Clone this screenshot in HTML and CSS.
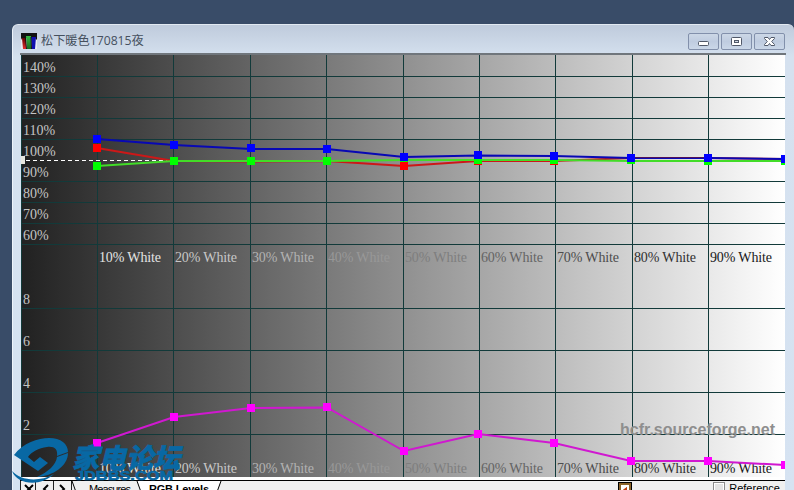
FILE: index.html
```html
<!DOCTYPE html>
<html lang="zh">
<head>
    <meta charset="UTF-8">
    <title>松下暖色170815夜</title>
    <link rel="stylesheet" href="styles.css">
</head>
<body>
    <div class="window">
        <header class="titlebar">
            <svg class="app-icon" width="16" height="16" viewBox="0 0 16 16">
                <defs>
                    <linearGradient id="ir" x1="0" y1="0" x2="0" y2="1"><stop offset="0" stop-color="#600"/><stop offset="1" stop-color="#e43030"/></linearGradient>
                    <linearGradient id="ig" x1="0" y1="0" x2="0" y2="1"><stop offset="0" stop-color="#3b4"/><stop offset="1" stop-color="#196a22"/></linearGradient>
                </defs>
                <rect width="16" height="16" fill="#e8edf3"/>
                <path d="M0 0H16V7L14 5H1L0 7Z" fill="#111"/>
                <path d="M1 5H5V16H2Z" fill="url(#ir)"/>
                <path d="M5 3H10V16H6Z" fill="url(#ig)"/>
                <path d="M10 4H15L14 16H11Z" fill="#1010b0"/>
                <path d="M4.5 5L5.500 16M10 4L10.500 16" stroke="#111"/>
            </svg>
            <h1 class="title">松下暖色170815夜</h1>
            <div class="buttons">
                <button class="win-btn"><svg width="29" height="15"><rect x="9.500" y="7.500" width="10" height="4" rx="1" fill="#fff" stroke="#505868"/></svg></button>
                <button class="win-btn"><svg width="29" height="15"><rect x="9.500" y="3.500" width="10" height="8" rx="1" fill="#fff" stroke="#505868"/><rect x="12.500" y="6.500" width="4" height="2" fill="#d0d8e4" stroke="#505868"/></svg></button>
                <button class="win-btn"><svg width="29" height="15"><path d="M9.500 3.500H13L14.500 5.500L16 3.500H19.500V4.500L16.700 7.500L19.500 10.500V11.500H16L14.500 9.500L13 11.500H9.500V10.500L12.300 7.500L9.500 4.500Z" fill="#fff" stroke="#505868"/></svg></button>
            </div>
        </header>

        <!-- RGB levels on top, delta E below -->
        <svg class="chart" width="764" height="422" viewBox="21 55 764 422">
            <defs>
                <linearGradient id="gray">
                    <stop offset="0" stop-color="#212121"/>
                    <stop offset="1" stop-color="#fff"/>
                </linearGradient>
            </defs>
            <rect x="21" y="55" width="764" height="422" fill="url(#gray)"/>
            <path class="grid" d="M21 76.500H785M21 97.500H785M21 118.500H785M21 139.500H785M21 181.500H785M21 202.500H785M21 223.500H785M21 244.500H785M21 308.500H785M21 350.500H785M21 392.500H785M21 434.500H785"/>
            <path class="grid" d="M21.500 55V477M97.500 55V477M173.500 55V477M250.500 55V477M326.500 55V477M403.500 55V477M479.500 55V477M555.500 55V477M632.500 55V477M708.500 55V477"/>
            <path class="target" d="M26 160.500H785"/>
            <rect x="21" y="156" width="4" height="8" fill="#e8e8e0"/>

            <g class="scale">
                <text x="23" y="72">140%</text>
                <text x="23" y="93">130%</text>
                <text x="23" y="114">120%</text>
                <text x="23" y="135">110%</text>
                <text x="23" y="156">100%</text>
                <text x="23" y="177">90%</text>
                <text x="23" y="198">80%</text>
                <text x="23" y="219">70%</text>
                <text x="23" y="240">60%</text>
                <text x="23" y="304">8</text>
                <text x="23" y="346">6</text>
                <text x="23" y="388">4</text>
                <text x="23" y="430">2</text>
            </g>
            <g class="levels">
                <text x="99" y="262" textLength="62" fill="#e4e4e4">10% White</text>
                <text x="175" y="262" textLength="62" fill="#c8c8c8">20% White</text>
                <text x="252" y="262" textLength="62" fill="#b2b2b2">30% White</text>
                <text x="328" y="262" textLength="62" fill="#989898">40% White</text>
                <text x="405" y="262" textLength="62" fill="#7e7e7e">50% White</text>
                <text x="481" y="262" textLength="62" fill="#646464">60% White</text>
                <text x="557" y="262" textLength="62" fill="#4c4c4c">70% White</text>
                <text x="634" y="262" textLength="62" fill="#303030">80% White</text>
                <text x="710" y="262" textLength="62" fill="#181818">90% White</text>
                <text x="99" y="473" textLength="62" fill="#e4e4e4">10% White</text>
                <text x="175" y="473" textLength="62" fill="#c8c8c8">20% White</text>
                <text x="252" y="473" textLength="62" fill="#b2b2b2">30% White</text>
                <text x="328" y="473" textLength="62" fill="#989898">40% White</text>
                <text x="405" y="473" textLength="62" fill="#7e7e7e">50% White</text>
                <text x="481" y="473" textLength="62" fill="#646464">60% White</text>
                <text x="557" y="473" textLength="62" fill="#4c4c4c">70% White</text>
                <text x="634" y="473" textLength="62" fill="#303030">80% White</text>
                <text x="710" y="473" textLength="62" fill="#181818">90% White</text>
            </g>
            <text class="source" x="620" y="435" textLength="155">hcfr.sourceforge.net</text>

            <g class="red">
                <polyline points="97,148 174,161 251,161.500 327,161 404,166 478,161 554,161 631,158 708,158 785,159"/>
                <path d="M93 144h8v8h-8zM170 157h8v8h-8zM247 157h8v8h-8zM400 162h8v8h-8zM474 157h8v8h-8zM550 157h8v8h-8z"/>
            </g>
            <g class="green">
                <polyline points="97,166 174,161 251,161 327,161 404,160 478,160 554,160 631,161 708,161 785,161"/>
                <path d="M93 162h8v8h-8zM170 157h8v8h-8zM247 157h8v8h-8zM323 157h8v8h-8zM400 156h8v6h-8zM474 156h8v8h-8zM550 156h8v8h-8zM627 156h8v8h-8zM704 157h8v8h-8zM781 157h8v8h-8z"/>
            </g>
            <g class="blue">
                <polyline points="97,139 174,145 251,149 327,149 404,157 478,155.500 554,156 631,158 708,158 785,159"/>
                <path d="M93 135h8v8h-8zM170 141h8v8h-8zM247 144h8v8h-8zM323 145h8v8h-8zM400 153h8v8h-8zM474 151h8v8h-8zM550 152h8v8h-8zM627 154h8v8h-8zM704 154h8v8h-8zM781 155h8v8h-8z"/>
            </g>
            <path d="M635 157.500H704" stroke="#501058"/>
            <g class="delta">
                <polyline points="97,443 174,417 251,408 327,407.500 404,451 478,434 554,443 631,461 708,461 785,465"/>
                <path d="M93 439h8v8h-8zM170 413h8v8h-8zM247 404h8v8h-8zM323 403h8v8h-8zM400 447h8v8h-8zM474 430h8v8h-8zM550 439h8v8h-8zM627 457h8v8h-8zM704 457h8v8h-8zM781 461h8v8h-8z"/>
            </g>
        </svg>

        <footer class="tabbar">
            <svg class="tabs" width="230" height="22" viewBox="0 0 230 22">
                <path d="M0 0H230V22H0Z" fill="#f0f0f0"/>
                <path d="M52 0H201L193 22H60Z" fill="#fff"/>
                <path d="M52 0H117L125 22H60Z" fill="#f0f0f0"/>
                <path d="M.5 0V22M15.500 0V22M33.500 0V22M51.500 0V22" stroke="#222"/>
                <path d="M52 0L60 22M117 0L125 22M201 0L193 22" stroke="#000" fill="none"/>
                <path d="M5 4L9 8L13 4M5 12L9 8L13 12M28 4L24 8L28 12M40 4L44 8L40 12" stroke="#000" stroke-width="2" fill="none"/>
                <text x="69" y="12" textLength="42">Measures</text>
                <text class="active" x="129" y="12" textLength="60">RGB Levels</text>
            </svg>
            <div class="options">
                <svg class="tool" width="14" height="14"><rect x=".5" y=".5" width="13" height="13" fill="#8a6328" stroke="#000"/><path d="M3 3H11V9H9V5L5 8H3Z" fill="#fff"/><path d="M5 8L9 5V8H6Z" fill="#c43c10"/></svg>
                <label class="reference"><input type="checkbox">Reference</label>
            </div>
        </footer>
    </div>

    <!-- Forum watermark -->
    <div class="watermark">
        <svg class="swoosh" width="60" height="48" viewBox="0 0 60 48">
            <path d="M3 18C12 6 27 1 38 1C50 1 57 7 57 15L46 19C47 12 43 9 36 10C28 11 20 15 17 20L23 25L29 20L37 26L27 34Z"/>
            <path d="M57 16C57 29 42 39 26 40C37 35 45 28 46 20Z"/>
            <path d="M1 34C9 43 27 46 43 37C30 50 6 48 1 34Z"/>
        </svg>
        <div class="brand">
            <strong>家电论坛</strong>
            <svg width="108" height="12"><text x="4" y="11" textLength="98" lengthAdjust="spacingAndGlyphs">JDBBS.COM</text></svg>
        </div>
    </div>
</body>
</html>
```
FILE: styles.css
```css
* {
    box-sizing: border-box;
}
body {
    margin: 0;
    height: 490px;
    padding: 24px 0 0 12px;
    overflow: hidden;
    background: #394c68;
    font-family: "Liberation Sans", "Noto Sans CJK SC", sans-serif;
}
svg {
    display: block;
}
.window {
    width: 782px;
    height: 480px;
    padding: 0 8px;
    border-left: 1px solid #edf3fa;
    border-top: 1px solid #e2e9f2;
    border-radius: 6px 6px 0 0;
    background: linear-gradient(#bfcbdc, #d5e1ef 32px, #d6e3f2);
}
.titlebar {
    display: flex;
    align-items: center;
    height: 30px;
    margin-left: -1px;
    padding-top: 4px;
    border-bottom: 2px solid #70767c;
}
.app-icon {
    margin-left: 1px;
}
.title {
    flex: 1;
    margin: 0 0 0 4px;
    font: 12.2px/18px "Open Sans", "Noto Sans CJK SC", sans-serif;
    color: #45505e;
}
.buttons {
    display: flex;
    gap: 2px;
    margin-right: 1px;
}
.win-btn {
    width: 31px;
    height: 17px;
    padding: 0;
    border: 1px solid #8290ab;
    border-radius: 2px;
    background: linear-gradient(#ccd7e6, #bfcce0 50%, #cad7e8);
}

/* chart */
.chart text {
    font: 14px "Liberation Serif", serif;
}
.grid {
    stroke: #123a3a;
    fill: none;
}
.target {
    stroke: #fff;
    stroke-dasharray: 4 3;
}
.scale {
    fill: #c4c4c4;
}
.chart .source {
    font: bold 16px "Liberation Sans", sans-serif;
    fill: #8e8e8e;
}
polyline {
    fill: none;
    stroke-width: 2;
}
.red { fill: #f00; }
.red polyline { stroke: #cc1818; }
.green { fill: #0f0; }
.green polyline { stroke: #42dc28; }
.blue { fill: #00f; }
.blue polyline { stroke: #0808b4; }
.delta { fill: #f0f; }
.delta polyline { stroke: #d018d0; }

/* tab bar */
.tabbar {
    display: flex;
    justify-content: space-between;
    width: 765px;
    height: 25px;
    margin-left: -1px;
    border-top: 3px solid #fff;
    background: #f0f0f0;
    box-shadow: inset 0 1px #000;
}
.tabs {
    margin-top: 1px;
}
.tabs text {
    font: 11px "Liberation Sans", sans-serif;
}
.tabs .active {
    font-weight: bold;
}
.options {
    display: flex;
    align-items: flex-start;
    gap: 81px;
    padding: 2px 5px 0 0;
    font-size: 11px;
}
.reference {
    display: flex;
    gap: 4px;
    line-height: 13px;
}
.reference input {
    appearance: none;
    width: 12px;
    height: 12px;
    margin: 0;
    border: 1px solid #8c8c8c;
    background: #e4e4e4;
    box-shadow: inset 0 0 0 1px #fff;
}

.watermark {
    position: absolute;
    left: 11px;
    top: 437px;
    display: flex;
    color: #0868a4;
    fill: #0868a4;
}
.brand strong {
    display: block;
    height: 32px;
    padding: 4px 0 0 1px;
    font: italic 900 27px/32px "Noto Sans CJK SC", sans-serif;
    -webkit-text-stroke: 0.6px #0868a4;
}
.brand text {
    font: bold 12px "Liberation Sans", sans-serif;
    stroke: #0868a4;
    stroke-width: 0.6px;
}
```
